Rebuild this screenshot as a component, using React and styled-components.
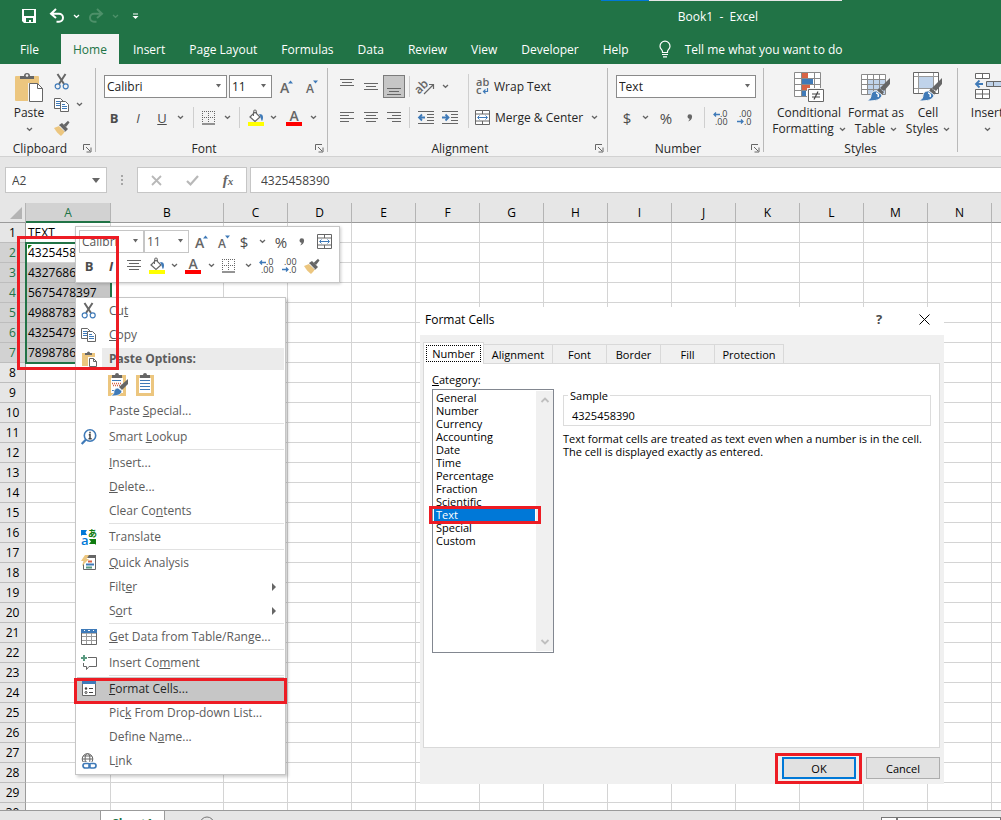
import React, { useState } from 'react';
import styled, { createGlobalStyle, css } from 'styled-components';

const GREEN = '#217346';
const GRAY = '#666666';
const BLUE = '#3f7ab8';
const TAN = '#ecc67f';

const GlobalStyle = createGlobalStyle`
	* {
		box-sizing: border-box;
	}
	body {
		margin: 0;
		overflow: hidden;
		font-family: 'Open Sans', 'Noto Sans', 'Liberation Sans', sans-serif;
		font-size: 12px;
		color: #262626;
	}
	button, input, select {
		font: inherit;
		color: inherit;
	}
	svg {
		flex: none;
		overflow: visible;
	}
`;

/* ---------- shared parts ---------- */

const Window = styled.div`
	position: relative;
	display: flex;
	flex-direction: column;
	height: 100vh;
	overflow: hidden;
	background-color: white;
`;

const PlainButton = styled.button`
	display: flex;
	align-items: center;
	justify-content: center;
	padding: 0;
	border: 0;
	background: none;
	white-space: nowrap;
`;

const ToolButton = styled(PlainButton)`
	flex: none;
	width: ${(props) => props.$w || 24}px;
	height: 23px;
	${(props) =>
		props.$pressed &&
		css`
			border: 1px solid #7b7b7b;
			background-color: #c6c6c6;
		`}
`;

const SelectWrap = styled.label`
	display: grid;
	flex: none;
	align-items: center;
	width: ${(props) => props.$w}px;
	height: 23px;
	border: 1px solid ${(props) => (props.$light ? '#c6c6c6' : '#8a8a8a')};
	background-color: white;
	color: ${(props) => (props.$light ? '#555' : '#222')};

	select {
		grid-area: 1 / 1;
		width: 100%;
		padding: 0 2px;
		border: 0;
		appearance: none;
		background: none;
	}
	svg {
		grid-area: 1 / 1;
		justify-self: end;
		margin-right: 4px;
		pointer-events: none;
	}
`;

const Mark = styled.span`
	position: absolute;
	border: 3px solid #ed1c24;
	pointer-events: none;
	z-index: 5;
`;

/* ---------- icons ---------- */

function Svg({ w = 16, h = 16, children }) {
	return (
		<svg width={w} height={h} viewBox={`0 0 ${w} ${h}`} fill='none' aria-hidden='true'>
			{children}
		</svg>
	);
}

const Chevron = ({ color = GRAY }) => (
	<Svg w={7} h={5}>
		<path d='M1 1l2.5 2.3L6 1' stroke={color} strokeWidth='1.3' />
	</Svg>
);

const Arrow = ({ big }) => (
	<Svg w={big ? 9 : 7} h={5}>
		<path d={big ? 'M0 0h8l-4 5z' : 'M1 0h5L3.5 3.5z'} fill={GRAY} />
	</Svg>
);

const SaveIcon = () => (
	<Svg w={14} h={14}>
		<path d='M0 0h14v14H2l-2-2z' fill='white' />
		<path d='M2 1h10v6H2zM4 9h7v4H9v-2H7v2H4z' fill={GREEN} />
	</Svg>
);

const UndoIcon = () => (
	<Svg w={15} h={14}>
		<path d='M6 0L1 4.7l5 4.3M1.5 4.7H9a4 4 0 010 8H6.5' stroke='white' strokeWidth='2' />
	</Svg>
);

const RedoIcon = () => (
	<Svg w={15} h={14}>
		<path d='M9 0l5 4.7L9 9M13.5 4.7H6a4 4 0 000 8h2.5' stroke='#4d9069' strokeWidth='2' />
	</Svg>
);

const CustomizeIcon = () => (
	<Svg w={7} h={7}>
		<path d='M1 1h5' stroke='white' />
		<path d='M.5 3h6L3.5 6z' fill='white' />
	</Svg>
);

const BulbIcon = () => (
	<Svg w={12} h={17}>
		<path
			d='M3.5 10.5C3.5 9 1 8 1 5.2a5 5 0 0110 0C11 8 8.5 9 8.5 10.5v1h-5z'
			stroke='white'
			strokeWidth='1.2'
		/>
		<path d='M3 13.5h6M4 15.8h4' stroke='white' strokeWidth='1.2' />
	</Svg>
);

const PasteIcon = () => (
	<Svg w={30} h={30}>
		<rect x='1' y='4' width='24' height='25' rx='1' fill={TAN} />
		<path d='M6 7V4h4a3 3 0 016 0h4v3z' fill={GRAY} />
		<circle cx='13' cy='3.5' r='1.3' fill='#f3f3f3' />
		<path d='M14 11h9l7 7v12H14z' fill='#f3f3f3' />
		<path d='M15.5 11.500h8l5 5v13h-13z' fill='white' stroke={GRAY} />
		<path d='M23.5 11.500v5h5' stroke={GRAY} />
	</Svg>
);

const CutIcon = () => (
	<Svg>
		<path d='M3.5 0l6.500 10M11.500 0L5 10' stroke={GRAY} strokeWidth='2' />
		<circle cx='3.700' cy='12.300' r='2.500' stroke={BLUE} strokeWidth='1.200' />
		<circle cx='11.700' cy='12.300' r='2.500' stroke={BLUE} strokeWidth='1.200' />
	</Svg>
);

const CopyIcon = () => (
	<Svg>
		<path d='M.5 1.500h6l3 3v7h-9z' fill='white' stroke={GRAY} />
		<path d='M2 4.500h4M2 6.500h4M2 8.500h4' stroke={BLUE} />
		<path d='M6.500 4.500h5l3 3v7h-8z' fill='white' stroke={GRAY} />
		<path d='M8 7.500h3M8 9.500h5M8 11.500h5' stroke={BLUE} />
	</Svg>
);

const BrushIcon = () => (
	<Svg>
		<path d='M0 8l5-2 6 5c-1 2-3 4-4 5C4 14 2 11 0 8z' fill={TAN} />
		<path d='M5 5l3-2 6 6-3 3z' fill={GRAY} />
		<path d='M9.500 5L14 .8 15.500 2.500 12 7z' fill={GRAY} />
		<path d='M5.500 6l5.500 5.500' stroke='#f3f3f3' />
	</Svg>
);

const LauncherIcon = () => (
	<Svg w={9} h={9}>
		<path d='M.5 6V.5H7M3 3l4 4M8 3.500V8H3.500' stroke={GRAY} />
	</Svg>
);

const GrowIcon = () => (
	<Svg w={12} h={16}>
		<text x='0' y='14' fontSize='14' fontWeight='600' fill={GRAY}>A</text>
		<path d='M8 4.500h5L10.500 1.500z' fill={BLUE} />
	</Svg>
);

const ShrinkIcon = () => (
	<Svg w={12} h={16}>
		<text x='0' y='14' fontSize='12' fontWeight='600' fill={GRAY}>A</text>
		<path d='M7 1.500h5L9.500 4.500z' fill={BLUE} />
	</Svg>
);

const BorderIcon = () => (
	<Svg w={14} h={14}>
		<path d='M.5 0v12M6.500 0v12M12.500 0v12M0 .5h13M0 6.500h13' stroke={GRAY} strokeDasharray='1 1' />
		<path d='M0 13h13' stroke={GRAY} strokeWidth='1.400' />
	</Svg>
);

const FillIcon = () => (
	<Svg w={16} h={16}>
		<path d='M2 7l5-5 5 5-5 4.500z' fill='white' stroke={GRAY} strokeWidth='1.200' />
		<path d='M5.500 6V1.500a1.500 1.500 0 013 0V4' stroke={GRAY} />
		<path d='M11 4c3 0 4 1 4 3.500 0 1.500-.5 3-1 3.500-1-.5-1-4-3-7z' fill={BLUE} />
		<path d='M0 12h16v4H0z' fill='#ffff00' />
	</Svg>
);

const FontColorIcon = () => (
	<Svg w={16} h={16}>
		<text x='3.500' y='11' fontSize='14' fontWeight='600' fill={GRAY}>A</text>
		<path d='M0 12h16v4H0z' fill='#ff0000' />
	</Svg>
);

const CommaIcon = () => (
	<Svg w={6} h={8}>
		<path d='M.5 2.500a2.300 2.300 0 014.600 0C5.100 5 3.500 6.800 1 7.500 2 6.500 2.500 5.800 2.500 4.800 1.300 4.700.5 3.700.5 2.500z' fill={GRAY} />
	</Svg>
);

// rows of [x, width, y]
const Lines = ({ rows, h = 16 }) => (
	<Svg w={15} h={h}>
		{rows.map(([x, w, y]) => (
			<path key={y} d={`M${x} ${y + 0.5}h${w}`} stroke={GRAY} />
		))}
	</Svg>
);

const TopIcon = () => <Lines rows={[[0, 14, 0], [2, 10, 3], [0, 14, 6]]} />;
const MiddleIcon = () => <Lines rows={[[0, 14, 4], [2, 10, 7], [0, 14, 10]]} />;
const BottomIcon = () => <Lines rows={[[0, 14, 9], [2, 10, 12], [0, 14, 15]]} />;
const LeftIcon = () => <Lines rows={[[0, 14, 2], [0, 9, 5], [0, 14, 8], [0, 9, 11]]} />;
const CenterIcon = () => <Lines rows={[[0, 14, 2], [2, 10, 5], [0, 14, 8], [2, 10, 11]]} />;
const RightIcon = () => <Lines rows={[[0, 14, 2], [5, 9, 5], [0, 14, 8], [5, 9, 11]]} />;

const OrientIcon = () => (
	<Svg w={18} h={16}>
		<text x='-3' y='12' fontSize='12' fontWeight='600' fill={GRAY} transform='rotate(-45 4 8)'>ab</text>
		<path d='M7 15l9-9M12 5.500h4.500V10' stroke={GRAY} strokeWidth='1.200' />
	</Svg>
);

const IndentIcon = ({ right }) => (
	<Svg w={16} h={14}>
		<path d='M0 .5h16M9 3.500h7M9 6.500h7M9 9.500h7M0 12.500h16' stroke={GRAY} />
		<path
			d={right ? 'M0 6.500h6M3.500 3.500l3 3-3 3' : 'M1 6.500h6M4 3.500l-3 3 3 3'}
			stroke={BLUE}
			strokeWidth='1.800'
		/>
	</Svg>
);

const WrapIcon = () => (
	<Svg w={14} h={17}>
		<text x='1' y='8' fontSize='11' fontWeight='600' fill={GRAY}>ab</text>
		<text x='1' y='16' fontSize='11' fontWeight='600' fill={GRAY}>c</text>
		<path d='M12.500 10v3.500H9M10.500 11.500l-2 2 2 2' stroke={BLUE} strokeWidth='1.200' />
	</Svg>
);

const MergeIcon = () => (
	<Svg w={15} h={15}>
		<path d='M.5.5h14v14H.5zM.5 4h14M.5 11h14M7.500.5V4M7.500 11v3.500' fill='white' stroke={GRAY} />
		<path d='M3 7.500h9M4.500 5.500l-2 2 2 2M10.500 5.500l2 2-2 2' stroke={BLUE} />
	</Svg>
);

const DecimalIcon = ({ less }) => (
	<Svg w={16} h={16}>
		<text x={less ? 3 : 8} y='7' fontSize='9' fill='#444'>{less ? '.00' : '.0'}</text>
		<text x={less ? 8 : 3} y='15' fontSize='9' fill='#444'>{less ? '.0' : '.00'}</text>
		{less ? (
			<path d='M1 11.500h6M5 9.500l2 2-2 2' stroke={BLUE} strokeWidth='1.300' />
		) : (
			<path d='M2 4.500h6M4 2.500l-2 2 2 2' stroke={BLUE} strokeWidth='1.300' />
		)}
	</Svg>
);

const ConditionalIcon = () => (
	<Svg w={32} h={30}>
		<path d='M1.500.5h26v24h-26z' fill='white' />
		<path d='M9 1h6v5H9zM9 13h8v5H9z' fill='#d86344' />
		<path d='M9 7h11v5H9zM9 19h4v5H9z' fill={BLUE} />
		<path d='M1.500.5h26v24h-26zM1.500 6.500h26M1.500 12.500h26M1.500 18.500h26M8.500.5v24M21.500.5v24' stroke='#8a8a8a' />
		<path d='M14 16h18v14H14z' fill='#f3f3f3' />
		<path d='M15.500 17.500h15v12h-15z' fill='white' stroke={GRAY} />
		<path d='M19 22h8M19 25h8M25 19.500l-4 8' stroke='#444' strokeWidth='1.200' />
	</Svg>
);

const PaintBrush = () => (
	<>
		<path d='M30 7v6l-6 7-4-3z' fill={GRAY} />
		<path d='M19 17l5 4-2 3-5-4z' fill={GRAY} />
		<path d='M17 20l5 4c-1 5-6 6-15 6 3-2 4-3 4-6 1-4 4-4 6-4z' fill={BLUE} stroke='#f3f3f3' />
		<path d='M16 22c2 0 3 2 2 4' stroke='white' strokeWidth='1.500' />
	</>
);

const FormatTableIcon = () => (
	<Svg w={32} h={32}>
		<path d='M1.500 3.500h24v20h-24z' fill='white' />
		<path d='M7 8h18v15H7z' fill='#c0d3ea' />
		<path d='M1.500 3.500h24v20h-24zM1.500 8.500h24M1.500 13.500h24M1.500 18.500h24M7.500 3.500v20M13.500 3.500v20M19.500 3.500v20' stroke='#8a8a8a' />
		<PaintBrush />
	</Svg>
);

const CellStylesIcon = () => (
	<Svg w={32} h={32}>
		<path d='M1.500 1.500h25v21h-25z' fill='white' stroke={GRAY} />
		<path d='M7 6h14v11H7z' fill='#c0d3ea' />
		<path d='M6.500 2v20M21.500 2v20M2 5.500h24M2 17.500h24' stroke='#9a9a9a' />
		<PaintBrush />
	</Svg>
);

const InsertIcon = () => (
	<Svg w={26} h={30}>
		<path d='M1.500 1.500h14v5h-14zM8.500 1.500v5M1.500 17.500h14v9h-14zM8.500 17.500v9M1.500 22h14' fill='white' stroke={GRAY} />
		<path d='M12.500 9.500h17v5h-17zM19.500 9.500v5' fill='#c0d3ea' stroke={GRAY} />
		<path d='M2 12h7M5.500 8.500L2 12l3.500 3.500' stroke={BLUE} strokeWidth='1.800' />
	</Svg>
);

const MenuPasteIcon = () => (
	<Svg>
		<path d='M1 2h13v13H1z' fill={TAN} />
		<path d='M4 4V2h2a1.500 1.500 0 013 0h2v2z' fill={GRAY} />
		<path d='M7 6h9v10H7z' fill='white' />
		<path d='M8.500 7.500h4l3 3v5h-7zM12.500 7.500v3h3' fill='white' stroke={GRAY} />
	</Svg>
);

const PasteOptionIcon = ({ brush }) => (
	<Svg w={20} h={24}>
		<path d='M1 2h18v21H1z' fill={TAN} />
		<path d='M4 5h12v15H4z' fill='white' />
		<path d='M5 5V2h3a2 2 0 014 0h3v3z' fill={GRAY} />
		{brush ? (
			<>
				<path d='M5 7.500h9M5 17.500h5' stroke={BLUE} />
				<path d='M5 10.500h9M6 12.500h9' stroke='#d86344' strokeWidth='1.500' strokeDasharray='1 1' />
				<path d='M21 6v5l-6 6-3-3z' fill={GRAY} />
				<path d='M11 15l4 3c-1 4-5 5-11 5 3-2 3-3 3-5 1-2 2-3 4-3z' fill={BLUE} stroke='white' strokeWidth='.7' />
			</>
		) : (
			<path d='M5 7.500h10M5 10.500h10M5 13.500h10M5 16.500h10' stroke={BLUE} />
		)}
	</Svg>
);

const LookupIcon = () => (
	<Svg>
		<circle cx='9' cy='6.500' r='5.700' stroke={BLUE} strokeWidth='1.600' />
		<path d='M5 10.500L.7 15' stroke={BLUE} strokeWidth='2.200' />
		<path d='M9 2.800v1.700M7.800 5.700H9v4M7.500 9.700h3.200' stroke='#444' strokeWidth='1.500' />
	</Svg>
);

const TranslateIcon = () => (
	<Svg>
		<path d='M0 1h6L4.500 3.500 6 6H1l-1 1z' fill='#0078d7' />
		<text x='0' y='16' fontSize='13' fontWeight='600' fill='#0078d7'>a</text>
		<text x='7' y='8' fontSize='9' fontWeight='700' fontFamily='Noto Sans CJK JP, sans-serif' fill='#107c10'>あ</text>
		<path d='M8 10h7v6l-1-1H8l2-2.500z' fill='#107c10' />
	</Svg>
);

const QuickIcon = () => (
	<Svg>
		<path d='M6 1.500h8.500v13H2.500V9' stroke={GRAY} />
		<path d='M7 0h8v3H6z' fill={GRAY} />
		<path d='M4 0h4L5.500 4H8L1 11l1.500-5H0z' fill={TAN} />
		<path d='M7 6.500h4' stroke='#d86344' strokeWidth='2' />
		<path d='M5 9.500h8' stroke={BLUE} strokeWidth='2' />
		<path d='M5 12.500h6' stroke='#5a9a80' strokeWidth='2' />
	</Svg>
);

const TableIcon = () => (
	<Svg>
		<path d='M.5 4h15v11.500H.5z' fill='white' stroke={GRAY} />
		<path d='M1 7.500h14M1 11.500h14M5.500 4v11M10.500 4v11' stroke='#9a9a9a' />
		<path d='M0 0h16v4H0z' fill={BLUE} />
		<path d='M3 1.500h1M7 1.500h2M12 1.500h1' stroke='white' />
	</Svg>
);

const CommentIcon = () => (
	<Svg>
		<path d='M7 2.500h8.500v9H8l-2.500 3v-3H2.500V8' stroke={GRAY} />
		<path d='M3 0v6M0 3h6' stroke='#5a9a80' strokeWidth='2' />
	</Svg>
);

const FormatIcon = () => (
	<Svg>
		<path d='M1.500 1.500h13v13h-13z' fill='white' stroke={GRAY} />
		<path d='M1 0h14v3H1z' fill={BLUE} />
		<path d='M8 7.500h4M8 11.500h4' stroke='#444' />
		<circle cx='5' cy='7.500' r='1.200' fill='#444' />
		<circle cx='5' cy='11.500' r='1' stroke='#444' />
	</Svg>
);

const LinkIcon = () => (
	<Svg>
		<circle cx='6.500' cy='6' r='5.300' stroke={GRAY} />
		<ellipse cx='6.500' cy='6' rx='2.400' ry='5.300' stroke={GRAY} />
		<path d='M1 6h11M2 3h9M2 9h4' stroke={GRAY} />
		<path d='M1 9h15v7H1z' fill='white' />
		<rect x='2' y='10.500' width='7' height='4.500' rx='2.200' stroke={BLUE} strokeWidth='1.700' />
		<rect x='8' y='10.500' width='7' height='4.500' rx='2.200' stroke={BLUE} strokeWidth='1.700' />
	</Svg>
);

/* ---------- title bar and tabs ---------- */

const Header = styled.header`
	position: relative;
	flex: none;
	background-color: ${GREEN};
	color: white;
`;

const Strip = styled.div`
	position: absolute;
	top: 0;
	left: 60%;
	width: 241px;
	height: 1px;
	background: linear-gradient(to right, #0078d7 48px, #e6e6e6 48px);
`;

const TitleBar = styled.div`
	display: flex;
	align-items: center;
	height: 34px;
	padding: 0 243px 2px 15px;
`;

const Title = styled.h1`
	margin: 0 0 0 auto;
	font-size: 12px;
	font-weight: 400;
	white-space: pre;
`;

const Tabs = styled.nav`
	display: flex;
	height: 30px;
`;

const Tab = styled(PlainButton)`
	padding: 0 ${(props) => props.$pad || 12}px;
	${(props) =>
		props.$active &&
		css`
			margin: 0 2px;
			background-color: #f3f3f3;
			color: ${GREEN};
		`}
`;

const Tell = styled(Tab)`
	gap: 14px;
`;

const TABS = [
	'File', 'Home', 'Insert', 'Page Layout', 'Formulas',
	'Data', 'Review', 'View', 'Developer', 'Help',
];

function TopBar() {
	return (
		<Header>
			<Strip />
			<TitleBar>
				<ToolButton $w={28} aria-label='Save'><SaveIcon /></ToolButton>
				<ToolButton $w={29} aria-label='Undo'><UndoIcon /></ToolButton>
				<ToolButton $w={8} aria-label='Undo history'><Chevron color='white' /></ToolButton>
				<ToolButton $w={31} aria-label='Redo'><RedoIcon /></ToolButton>
				<ToolButton $w={8} aria-label='Redo history'><Chevron color='#4d9069' /></ToolButton>
				<ToolButton $w={33} aria-label='Customize'><CustomizeIcon /></ToolButton>
				<Title>Book1  -  Excel</Title>
			</TitleBar>
			<Tabs>
				{TABS.map((tab) => (
					<Tab key={tab} $active={tab === 'Home'} $pad={tab === 'File' ? 20 : 12}>
						{tab}
					</Tab>
				))}
				<Tell $pad={18}>
					<BulbIcon />
					Tell me what you want to do
				</Tell>
			</Tabs>
		</Header>
	);
}

/* ---------- ribbon ---------- */

const RibbonBar = styled.section`
	display: flex;
	flex: none;
	height: 93px;
	overflow: hidden;
	border-bottom: 1px solid #d2d2d2;
	background-color: #f3f3f3;
`;

const GroupBox = styled.div`
	display: flex;
	flex: none;
	flex-direction: column;
	width: ${(props) => props.$w}px;
	margin: 4px 0;
	border-right: 1px solid #b9b9b9;
`;

const GroupBody = styled.div`
	display: flex;
	flex: 1;
	padding-left: ${(props) => props.$left || 0}px;
`;

const GroupFoot = styled.div`
	display: flex;
	align-items: center;
	height: 16px;
	margin-bottom: -4px;

	span {
		flex: 1;
		text-align: center;
	}
`;

const Rows = styled.div`
	display: flex;
	flex-direction: column;
	gap: 8px;
	padding-top: 7px;
`;

const Row = styled.div`
	display: flex;
	align-items: center;
	gap: ${(props) => props.$gap || 0}px;
`;

const Divider = styled.span`
	flex: none;
	width: 1px;
	height: 21px;
	margin: 0 ${(props) => props.$m || 4}px;
	background-color: #cfcfcf;
`;

const TallDivider = styled(Divider)`
	height: 54px;
	margin-top: 6px;
`;

const Stack = styled.div`
	display: flex;
	flex-direction: column;
	padding-top: 2px;
`;

const BigButton = styled(PlainButton)`
	flex-direction: column;
	justify-content: flex-start;
	width: ${(props) => props.$w}px;
	padding-top: 3px;
	line-height: 16px;

	> svg:first-child {
		height: 32px;
		margin-bottom: 2px;
	}
	> span {
		display: flex;
		align-items: center;
		gap: 5px;
		height: 16px;
	}
`;

const Letter = styled.span`
	font-size: ${(props) => props.$size || 13}px;
	font-weight: ${(props) => (props.$bold ? 700 : 400)};
	font-style: ${(props) => (props.$italic ? 'italic' : 'normal')};
	text-decoration: ${(props) => (props.$under ? 'underline' : 'none')};
	color: #4c4c4c;
`;

const TextButton = styled(PlainButton)`
	align-self: flex-start;
	gap: 5px;
	height: 23px;
`;

function Dropdown({ label, value, w, light }) {
	return (
		<SelectWrap $w={w} $light={light}>
			<select aria-label={label} defaultValue={value}>
				<option>{value}</option>
			</select>
			<Arrow />
		</SelectWrap>
	);
}

function Drop({ w = 14, label }) {
	return (
		<ToolButton $w={w} aria-label={label}>
			<Chevron />
		</ToolButton>
	);
}

function Group({ name, w, left, launcher = true, children }) {
	return (
		<GroupBox $w={w}>
			<GroupBody $left={left}>{children}</GroupBody>
			<GroupFoot>
				<span>{name}</span>
				{launcher && (
					<ToolButton $w={15} aria-label={`${name} settings`}><LauncherIcon /></ToolButton>
				)}
			</GroupFoot>
		</GroupBox>
	);
}

function Ribbon() {
	return (
		<RibbonBar>
			<Group name='Clipboard' w={96} left={6}>
				<BigButton $w={46}>
					<PasteIcon />
					<span>Paste</span>
					<span><Chevron /></span>
				</BigButton>
				<Stack>
					<ToolButton $w={20} aria-label='Cut'><CutIcon /></ToolButton>
					<Row>
						<ToolButton $w={20} aria-label='Copy'><CopyIcon /></ToolButton>
						<Drop label='Copy options' />
					</Row>
					<ToolButton $w={20} aria-label='Format Painter'><BrushIcon /></ToolButton>
				</Stack>
			</Group>

			<Group name='Font' w={232} left={8}>
				<Rows>
					<Row $gap={2}>
						<Dropdown label='Font' value='Calibri' w={123} />
						<Dropdown label='Font size' value='11' w={43} />
						<ToolButton aria-label='Grow font'><GrowIcon /></ToolButton>
						<ToolButton aria-label='Shrink font'><ShrinkIcon /></ToolButton>
					</Row>
					<Row>
						<ToolButton $w={20} aria-label='Bold'><Letter $bold>B</Letter></ToolButton>
						<ToolButton $w={28} aria-label='Italic'><Letter $italic>I</Letter></ToolButton>
						<ToolButton $w={20} aria-label='Underline'><Letter $under>U</Letter></ToolButton>
						<Drop label='Underline options' w={17} />
						<Divider />
						<ToolButton $w={22} aria-label='Borders'><BorderIcon /></ToolButton>
						<Drop label='Border options' />
						<Divider $m={5} />
						<ToolButton $w={22} aria-label='Fill color'><FillIcon /></ToolButton>
						<Drop label='Fill options' w={12} />
						<ToolButton $w={30} aria-label='Font color'><FontColorIcon /></ToolButton>
						<Drop label='Font color options' w={8} />
					</Row>
				</Rows>
			</Group>

			<Group name='Alignment' w={280} left={7}>
				<Rows>
					<Row>
						<ToolButton aria-label='Top align'><TopIcon /></ToolButton>
						<ToolButton aria-label='Middle align'><MiddleIcon /></ToolButton>
						<ToolButton $w={22} $pressed aria-label='Bottom align'><BottomIcon /></ToolButton>
						<Divider />
						<ToolButton aria-label='Orientation'><OrientIcon /></ToolButton>
						<Drop label='Orientation options' />
					</Row>
					<Row>
						<ToolButton aria-label='Align left'><LeftIcon /></ToolButton>
						<ToolButton aria-label='Center'><CenterIcon /></ToolButton>
						<ToolButton $w={22} aria-label='Align right'><RightIcon /></ToolButton>
						<Divider />
						<ToolButton aria-label='Decrease indent'><IndentIcon /></ToolButton>
						<ToolButton aria-label='Increase indent'><IndentIcon right /></ToolButton>
					</Row>
				</Rows>
				<TallDivider $m={6} />
				<Rows>
					<TextButton><WrapIcon />Wrap Text</TextButton>
					<Row>
						<TextButton><MergeIcon />Merge &amp; Center</TextButton>
						<Drop label='Merge options' w={22} />
					</Row>
				</Rows>
			</Group>

			<Group name='Number' w={156} left={8}>
				<Rows>
					<Dropdown label='Number format' value='Text' w={140} />
					<Row>
						<ToolButton $w={22} aria-label='Accounting format'><Letter $size={15}>$</Letter></ToolButton>
						<Drop label='Accounting options' />
						<ToolButton $w={28} aria-label='Percent style'><Letter $size={15}>%</Letter></ToolButton>
						<ToolButton $w={20} aria-label='Comma style'><CommaIcon /></ToolButton>
						<Divider />
						<ToolButton $w={22} aria-label='Increase decimal'><DecimalIcon /></ToolButton>
						<ToolButton $w={26} aria-label='Decrease decimal'><DecimalIcon less /></ToolButton>
					</Row>
				</Rows>
			</Group>

			<Group name='Styles' w={194} left={8} launcher={false}>
				<BigButton $w={74}>
					<ConditionalIcon />
					<span>Conditional</span>
					<span>Formatting <Chevron /></span>
				</BigButton>
				<BigButton $w={60}>
					<FormatTableIcon />
					<span>Format as</span>
					<span>Table <Chevron /></span>
				</BigButton>
				<BigButton $w={44}>
					<CellStylesIcon />
					<span>Cell</span>
					<span>Styles <Chevron /></span>
				</BigButton>
			</Group>

			<Group name='' w={200} left={9} launcher={false}>
				<BigButton $w={40}>
					<InsertIcon />
					<span>Insert</span>
					<span><Chevron /></span>
				</BigButton>
			</Group>
		</RibbonBar>
	);
}

/* ---------- formula bar ---------- */

const FormulaRow = styled.div`
	display: flex;
	flex: none;
	align-items: center;
	height: 46px;
	padding-left: 5px;
	background-color: #e6e6e6;
	color: #444;
`;

const NameBox = styled.label`
	display: grid;
	align-items: center;
	width: 102px;
	height: 26px;
	border: 1px solid #c6c6c6;
	background-color: white;

	input, svg {
		grid-area: 1 / 1;
	}
	input {
		width: 100%;
		padding: 0 6px;
		border: 0;
		background: none;
	}
	svg {
		justify-self: end;
		margin-right: 5px;
	}
`;

const FormulaTools = styled.div`
	display: flex;
	align-items: center;
	width: 110px;
	height: 26px;
	margin-right: 3px;
	border: 1px solid #c6c6c6;
	background-color: white;
`;

const Dots = styled.span`
	width: 30px;
	text-align: center;
`;

const FormulaInput = styled.input`
	flex: 1;
	min-width: 0;
	height: 26px;
	padding: 0 10px;
	border: 1px solid #c6c6c6;
	border-right: 0;
	background-color: white;
`;

const Fx = styled.span`
	font-family: 'Liberation Serif', serif;
	font-size: 15px;
	font-style: italic;
	font-weight: 700;
	color: #666;

	small {
		font-size: 11px;
	}
`;

function FormulaBar() {
	return (
		<FormulaRow>
			<NameBox>
				<input aria-label='Name box' defaultValue='A2' />
				<Arrow big />
			</NameBox>
			<Dots>
				<Svg w={3} h={10}>
					<path d='M0 0h2v2H0zM0 4h2v2H0zM0 8h2v2H0z' fill='#a6a6a6' />
				</Svg>
			</Dots>
			<FormulaTools>
				<ToolButton $w={36} aria-label='Cancel entry'>
					<Svg w={11} h={11}><path d='M1 1l9 9M10 1l-9 9' stroke='#b8b8b8' strokeWidth='1.8' /></Svg>
				</ToolButton>
				<ToolButton $w={36} aria-label='Enter'>
					<Svg w={13} h={11}><path d='M1 6l3.5 3.5L12 1' stroke='#b8b8b8' strokeWidth='2.2' /></Svg>
				</ToolButton>
				<ToolButton $w={36} aria-label='Insert function'><Fx>f<small>x</small></Fx></ToolButton>
			</FormulaTools>
			<FormulaInput aria-label='Formula bar' defaultValue='4325458390' />
		</FormulaRow>
	);
}

/* ---------- sheet ---------- */

const SheetArea = styled.main`
	flex: 1;
	min-height: 0;
	overflow: hidden;
`;

const Grid = styled.table`
	border-spacing: 0;
	table-layout: fixed;
	color: black;

	th, td {
		height: 20px;
		padding: 1px 0 0;
		line-height: 18px;
		font-weight: 400;
		white-space: nowrap;
	}
`;

const Col = styled.col`
	width: ${(props) => props.$w}px;
`;

const ColHead = styled.th`
	border-right: 1px solid #b4b4b4;
	border-bottom: 1px solid #9b9b9b;
	background-color: #e6e6e6;
	${(props) =>
		props.$selected &&
		css`
			background-color: #d2d2d2;
			box-shadow: inset 0 -1px ${GREEN};
			border-bottom-color: ${GREEN};
			color: ${GREEN};
		`}
`;

const RowHead = styled.th`
	border-right: 1px solid #9b9b9b;
	border-bottom: 1px solid #bdbdbd;
	background-color: #e6e6e6;
	${(props) =>
		props.$selected &&
		css`
			background-color: #d2d2d2;
			color: ${GREEN};
		`}
`;

const Cell = styled.td`
	position: relative;
	border-right: 1px solid #d4d4d4;
	border-bottom: 1px solid #d4d4d4;
	${(props) =>
		props.$selected &&
		css`
			border-color: #b0b0b0;
			background-color: #c6c6c6;
		`}

	> span {
		padding-left: 2px;
	}
`;

const Corner = styled.th`
	border-right: 1px solid #b4b4b4;
	border-bottom: 1px solid #9b9b9b;
	background-color: #e6e6e6;

	svg {
		display: block;
		margin: 0 3px 0 auto;
	}
`;

const Selection = styled.div`
	position: absolute;
	top: -1px;
	left: -1px;
	width: 87px;
	height: 122px;
	border: 2px solid ${GREEN};
	z-index: 1;

	svg {
		display: block;
		margin: 1px;
	}
`;

const COLUMNS = 'ABCDEFGHIJKLMNOPQRSTUVWXYZ'.split('');
const VALUES = ['TEXT', '4325458390', '4327686', '5675478397', '4988783', '4325479', '7898786'];
const ROWS = Array.from({ length: 40 }, (_, i) => i + 1);

const widthOf = (col) => {
	if (col === 'A') return 85;
	if (col === 'B') return 113;
	return 64;
};

function Sheet() {
	return (
		<SheetArea>
			<Grid style={{ width: 26 + COLUMNS.reduce((sum, c) => sum + widthOf(c), 0) }}>
				<colgroup>
					<Col $w={26} />
					{COLUMNS.map((c) => <Col key={c} $w={widthOf(c)} />)}
				</colgroup>
				<thead>
					<tr>
						<Corner aria-label='Select all'>
							<Svg w={13} h={13}><path d='M13 0v12H1z' fill='#b4b4b4' /></Svg>
						</Corner>
						{COLUMNS.map((c) => <ColHead key={c} $selected={c === 'A'}>{c}</ColHead>)}
					</tr>
				</thead>
				<tbody>
					{ROWS.map((n) => {
						const inRange = n >= 2 && n <= 7;
						return (
							<tr key={n}>
								<RowHead $selected={inRange}>{n}</RowHead>
								{COLUMNS.map((c) => (
									<Cell key={c} $selected={c === 'A' && inRange && n > 2}>
										{c === 'A' && <span>{VALUES[n - 1]}</span>}
										{c === 'A' && n === 2 && (
											<Selection>
												<Svg w={4} h={4}><path d='M0 0h4L0 4z' fill='#107c10' /></Svg>
											</Selection>
										)}
									</Cell>
								))}
							</tr>
						);
					})}
				</tbody>
			</Grid>
		</SheetArea>
	);
}

const SheetTabs = styled.footer`
	display: flex;
	flex: none;
	height: 10px;
	overflow: hidden;
	border-top: 1px solid #9b9b9b;
	background-color: #e6e6e6;
`;

const SheetTab = styled(PlainButton)`
	flex: none;
	width: 65px;
	height: 26px;
	margin: -1px 34px 0 100px;
	border: solid #9b9b9b;
	border-width: 0 1px;
	background-color: white;
	color: ${GREEN};
	font-weight: 700;
`;

const ScrollBox = styled.span`
	width: 120px;
	height: 20px;
	margin: 6px 0 0 auto;
	border: 1px solid #777;
	background: linear-gradient(to right, white 14px, #777 14px, #777 16px, white 16px);
`;

/* ---------- floating toolbar ---------- */

const MiniBar = styled.div`
	position: absolute;
	top: 226px;
	left: 75px;
	display: flex;
	flex-direction: column;
	gap: 1px;
	width: 265px;
	padding: 3px 3px 5px;
	border: 1px solid #c6c6c6;
	background-color: white;
	box-shadow: 1px 1px 3px rgba(0, 0, 0, 0.2);
	z-index: 3;
`;

function MiniToolbar() {
	return (
		<MiniBar>
			<Row>
				<Dropdown label='Cell font' value='Calibri' w={65} light />
				<Dropdown label='Cell font size' value='11' w={45} light />
				<ToolButton $w={24} aria-label='Grow font'><GrowIcon /></ToolButton>
				<ToolButton $w={22} aria-label='Shrink font'><ShrinkIcon /></ToolButton>
				<ToolButton $w={18} aria-label='Accounting format'><Letter $size={15}>$</Letter></ToolButton>
				<Drop w={18} label='Accounting options' />
				<ToolButton $w={20} aria-label='Percent style'><Letter $size={15}>%</Letter></ToolButton>
				<ToolButton $w={22} aria-label='Comma style'><CommaIcon /></ToolButton>
				<ToolButton $w={22} aria-label='Merge'><MergeIcon /></ToolButton>
			</Row>
			<Row>
				<ToolButton $w={20} aria-label='Bold'><Letter $bold>B</Letter></ToolButton>
				<ToolButton $w={24} aria-label='Italic'><Letter $italic $bold>I</Letter></ToolButton>
				<ToolButton $w={22} aria-label='Center'><CenterIcon /></ToolButton>
				<ToolButton $w={24} aria-label='Fill color'><FillIcon /></ToolButton>
				<Drop w={10} label='Fill options' />
				<ToolButton $w={28} aria-label='Font color'><FontColorIcon /></ToolButton>
				<Drop w={8} label='Font color options' />
				<ToolButton $w={28} aria-label='Borders'><BorderIcon /></ToolButton>
				<Drop w={10} label='Border options' />
				<ToolButton $w={26} aria-label='Increase decimal'><DecimalIcon /></ToolButton>
				<ToolButton $w={20} aria-label='Decrease decimal'><DecimalIcon less /></ToolButton>
				<ToolButton $w={26} aria-label='Format Painter'><BrushIcon /></ToolButton>
			</Row>
		</MiniBar>
	);
}

/* ---------- context menu ---------- */

const MenuBox = styled.div`
	position: absolute;
	top: 297px;
	left: 75px;
	width: 211px;
	padding: 1px;
	border: 1px solid #c6c6c6;
	background-color: white;
	box-shadow: 2px 2px 3px rgba(0, 0, 0, 0.2);
	color: #5c5c5c;
	z-index: 3;
`;

const MenuItem = styled.button`
	position: relative;
	display: grid;
	grid-template-columns: 32px 1fr 16px;
	align-items: center;
	width: 100%;
	height: 24px;
	padding: 0;
	border: 0;
	background-color: ${(props) => (props.$active ? '#c6c6c6' : 'transparent')};
	color: ${(props) => (props.$active ? '#262626' : 'inherit')};
	text-align: left;
	white-space: nowrap;

	> svg {
		margin-left: 4px;
	}
	> span {
		padding-bottom: 2px;
	}
`;

const MenuMark = styled(Mark)`
	inset: 1px -3px -3px -3px;
`;

const MenuHead = styled.div`
	display: grid;
	grid-template-columns: 25px 1fr;
	align-items: center;
	height: 24px;
	font-weight: 700;

	> svg {
		margin-left: 4px;
	}
	> span {
		padding-left: 7px;
		line-height: 22px;
		background-color: #ebebeb;
	}
`;

const MenuLine = styled.hr`
	height: 1px;
	margin: 0 0 1px 32px;
	border: 0;
	background-color: #e1e1e1;
`;

const PasteRow = styled.div`
	display: flex;
	align-items: center;
	gap: 4px;
	height: 28px;
	padding-left: 28px;
`;

// "_" marks the letter that is the access key
function Label({ text }) {
	const at = text.indexOf('_');
	if (at < 0) return <span>{text}</span>;
	return (
		<span>
			{text.slice(0, at)}
			<u>{text[at + 1]}</u>
			{text.slice(at + 2)}
		</span>
	);
}

const MENU = [
	{ text: 'Cu_t', Icon: CutIcon },
	{ text: '_Copy', Icon: CopyIcon },
	{ paste: true },
	{ text: 'Paste _Special...' },
	{ line: true },
	{ text: 'Smart _Lookup', Icon: LookupIcon },
	{ line: true },
	{ text: '_Insert...' },
	{ text: '_Delete...' },
	{ text: 'Clear Co_ntents' },
	{ line: true },
	{ text: 'Translate', Icon: TranslateIcon },
	{ line: true },
	{ text: '_Quick Analysis', Icon: QuickIcon },
	{ text: 'Filt_er', more: true },
	{ text: 'S_ort', more: true },
	{ line: true },
	{ text: '_Get Data from Table/Range...', Icon: TableIcon },
	{ line: true },
	{ text: 'Insert Co_mment', Icon: CommentIcon },
	{ line: true },
	{ text: '_Format Cells...', Icon: FormatIcon, active: true },
	{ text: 'Pic_k From Drop-down List...' },
	{ text: 'Define N_ame...' },
	{ text: 'L_ink', Icon: LinkIcon },
];

function ContextMenu() {
	return (
		<MenuBox role='menu'>
			{MENU.map(({ text, Icon, line, paste, more, active }, i) => {
				if (line) return <MenuLine key={i} />;
				if (paste) {
					return (
						<div key={i}>
							<MenuHead><MenuPasteIcon /><span>Paste Options:</span></MenuHead>
							<PasteRow>
								<ToolButton aria-label='Match destination formatting'><PasteOptionIcon brush /></ToolButton>
								<ToolButton aria-label='Keep text only'><PasteOptionIcon /></ToolButton>
							</PasteRow>
						</div>
					);
				}
				return (
					<MenuItem key={i} role='menuitem' $active={active}>
						{Icon ? <Icon /> : <span />}
						<Label text={text} />
						{more && <Svg w={5} h={8}><path d='M0 0l4 4-4 4z' fill={GRAY} /></Svg>}
						{active && <MenuMark />}
					</MenuItem>
				);
			})}
		</MenuBox>
	);
}

/* ---------- dialog ---------- */

const DialogBox = styled.div`
	position: absolute;
	top: 307px;
	left: 420px;
	width: 524px;
	background-color: #f0f0f0;
	color: black;
	font-size: 11px;
	z-index: 4;
`;

const DialogTitle = styled.div`
	display: flex;
	align-items: center;
	height: 28px;
	padding: 0 8px 4px 5px;
	background-color: white;

	h2 {
		flex: 1;
		margin: 0;
		font-size: 12px;
		font-weight: 400;
	}
`;

const DialogTabs = styled.div`
	display: flex;
	align-items: flex-end;
	height: 28px;
	padding-left: 3px;
`;

const DialogTab = styled(PlainButton)`
	width: ${(props) => props.$w}px;
	height: 19px;
	border: 1px solid #d9d9d9;
	border-width: 1px 1px 0 0;
	${(props) =>
		props.$active &&
		css`
			height: 22px;
			margin-bottom: -1px;
			padding: 2px;
			border-left-width: 1px;
			background-color: white;
			z-index: 1;

			span {
				flex: 1;
				border: 1px dotted black;
				line-height: 15px;
			}
		`}
`;

const Panel = styled.div`
	display: flex;
	gap: 9px;
	min-height: 385px;
	margin: 0 4px 0 3px;
	padding: 9px 8px;
	border: 1px solid #d9d9d9;
	background-color: white;
	line-height: 13px;
`;

const Category = styled.div`
	width: 122px;
`;

const ListBox = styled.div`
	display: flex;
	height: 264px;
	margin-top: 3px;
	border: 1px solid #828790;
`;

const List = styled.ul`
	flex: 1;
	margin: 0;
	padding: 1px 0 0 1px;
	list-style: none;
`;

const Item = styled.li`
	position: relative;
	height: 13px;
	padding-left: 2px;
	line-height: 13px;
	cursor: default;
	${(props) =>
		props.$active &&
		css`
			background-color: #0078d7;
			color: white;
		`}
`;

const ItemMark = styled(Mark)`
	inset: -2px -6px -3px -5px;
`;

const ScrollBar = styled.div`
	display: flex;
	flex-direction: column;
	align-items: center;
	justify-content: space-between;
	width: 17px;
	margin: 1px 0 1px 1px;
	padding: 6px 0;
	background-color: #f0f0f0;
`;

const Detail = styled.div`
	flex: 1;
	padding-top: 16px;

	p {
		margin: 6px 0;
	}
`;

const Sample = styled.fieldset`
	min-width: 0;
	height: 37px;
	margin: 0;
	padding: 7px 8px;
	border: 1px solid #dcdcdc;

	legend {
		margin-left: -4px;
		padding: 0 2px;
	}
`;

const Actions = styled.div`
	display: flex;
	justify-content: flex-end;
	gap: 10px;
	padding: 9px 4px 5px;
`;

const ActionButton = styled(PlainButton)`
	position: relative;
	width: 74px;
	height: 22px;
	border: 1px solid #adadad;
	background-color: #e1e1e1;
	${(props) =>
		props.$primary &&
		css`
			border: 2px solid #0078d7;
		`}
`;

const ActionMark = styled(Mark)`
	inset: -6px -8px -7px -9px;
`;

const CATEGORIES = [
	'General', 'Number', 'Currency', 'Accounting', 'Date', 'Time',
	'Percentage', 'Fraction', 'Scientific', 'Text', 'Special', 'Custom',
];

const DIALOG_TABS = [
	['Number', 61], ['Alignment', 69], ['Font', 54], ['Border', 54], ['Fill', 54], ['Protection', 69],
];

function FormatDialog() {
	const [category, setCategory] = useState('Text');

	return (
		<DialogBox role='dialog' aria-label='Format Cells'>
			<DialogTitle>
				<h2>Format Cells</h2>
				<ToolButton $w={66} aria-label='Help'><Letter $bold>?</Letter></ToolButton>
				<ToolButton $w={24} aria-label='Close'>
					<Svg w={11} h={11}><path d='M.5.5l10 10M10.5.5l-10 10' stroke='black' /></Svg>
				</ToolButton>
			</DialogTitle>
			<DialogTabs role='tablist'>
				{DIALOG_TABS.map(([name, w]) => (
					<DialogTab key={name} role='tab' $w={w} $active={name === 'Number'}>
						<span>{name}</span>
					</DialogTab>
				))}
			</DialogTabs>
			<Panel>
				<Category>
					<Label text='_Category:' />
					<ListBox>
						<List role='listbox' aria-label='Category'>
							{CATEGORIES.map((name) => (
								<Item
									key={name}
									role='option'
									aria-selected={name === category}
									$active={name === category}
									onClick={() => setCategory(name)}
								>
									{name}
									{name === category && <ItemMark />}
								</Item>
							))}
						</List>
						<ScrollBar>
							<Svg w={8} h={6}><path d='M.5 5L4 1.5 7.5 5' stroke='#bfbfbf' strokeWidth='1.8' /></Svg>
							<Svg w={8} h={6}><path d='M.5 1L4 4.5 7.5 1' stroke='#bfbfbf' strokeWidth='1.8' /></Svg>
						</ScrollBar>
					</ListBox>
				</Category>
				<Detail>
					<Sample>
						<legend>Sample</legend>
						4325458390
					</Sample>
					<p>
						Text format cells are treated as text even when a number is in the cell.
						<br />
						The cell is displayed exactly as entered.
					</p>
				</Detail>
			</Panel>
			<Actions>
				<ActionButton $primary>
					OK
					<ActionMark />
				</ActionButton>
				<ActionButton>Cancel</ActionButton>
			</Actions>
		</DialogBox>
	);
}

const RangeMark = styled(Mark)`
	top: 236px;
	left: 17px;
	width: 102px;
	height: 134px;
`;

function App() {
	return (
		<Window>
			<GlobalStyle />
			<TopBar />
			<Ribbon />
			<FormulaBar />
			<Sheet />
			<SheetTabs>
				<SheetTab>Sheet1</SheetTab>
				<Svg w={16} h={22}>
					<circle cx='8' cy='13' r='7' stroke='#777' />
					<path d='M8 9v8M4 13h8' stroke='#777' />
				</Svg>
				<ScrollBox />
			</SheetTabs>
			<MiniToolbar />
			<ContextMenu />
			<FormatDialog />
			<RangeMark />
		</Window>
	);
}

export default App;
